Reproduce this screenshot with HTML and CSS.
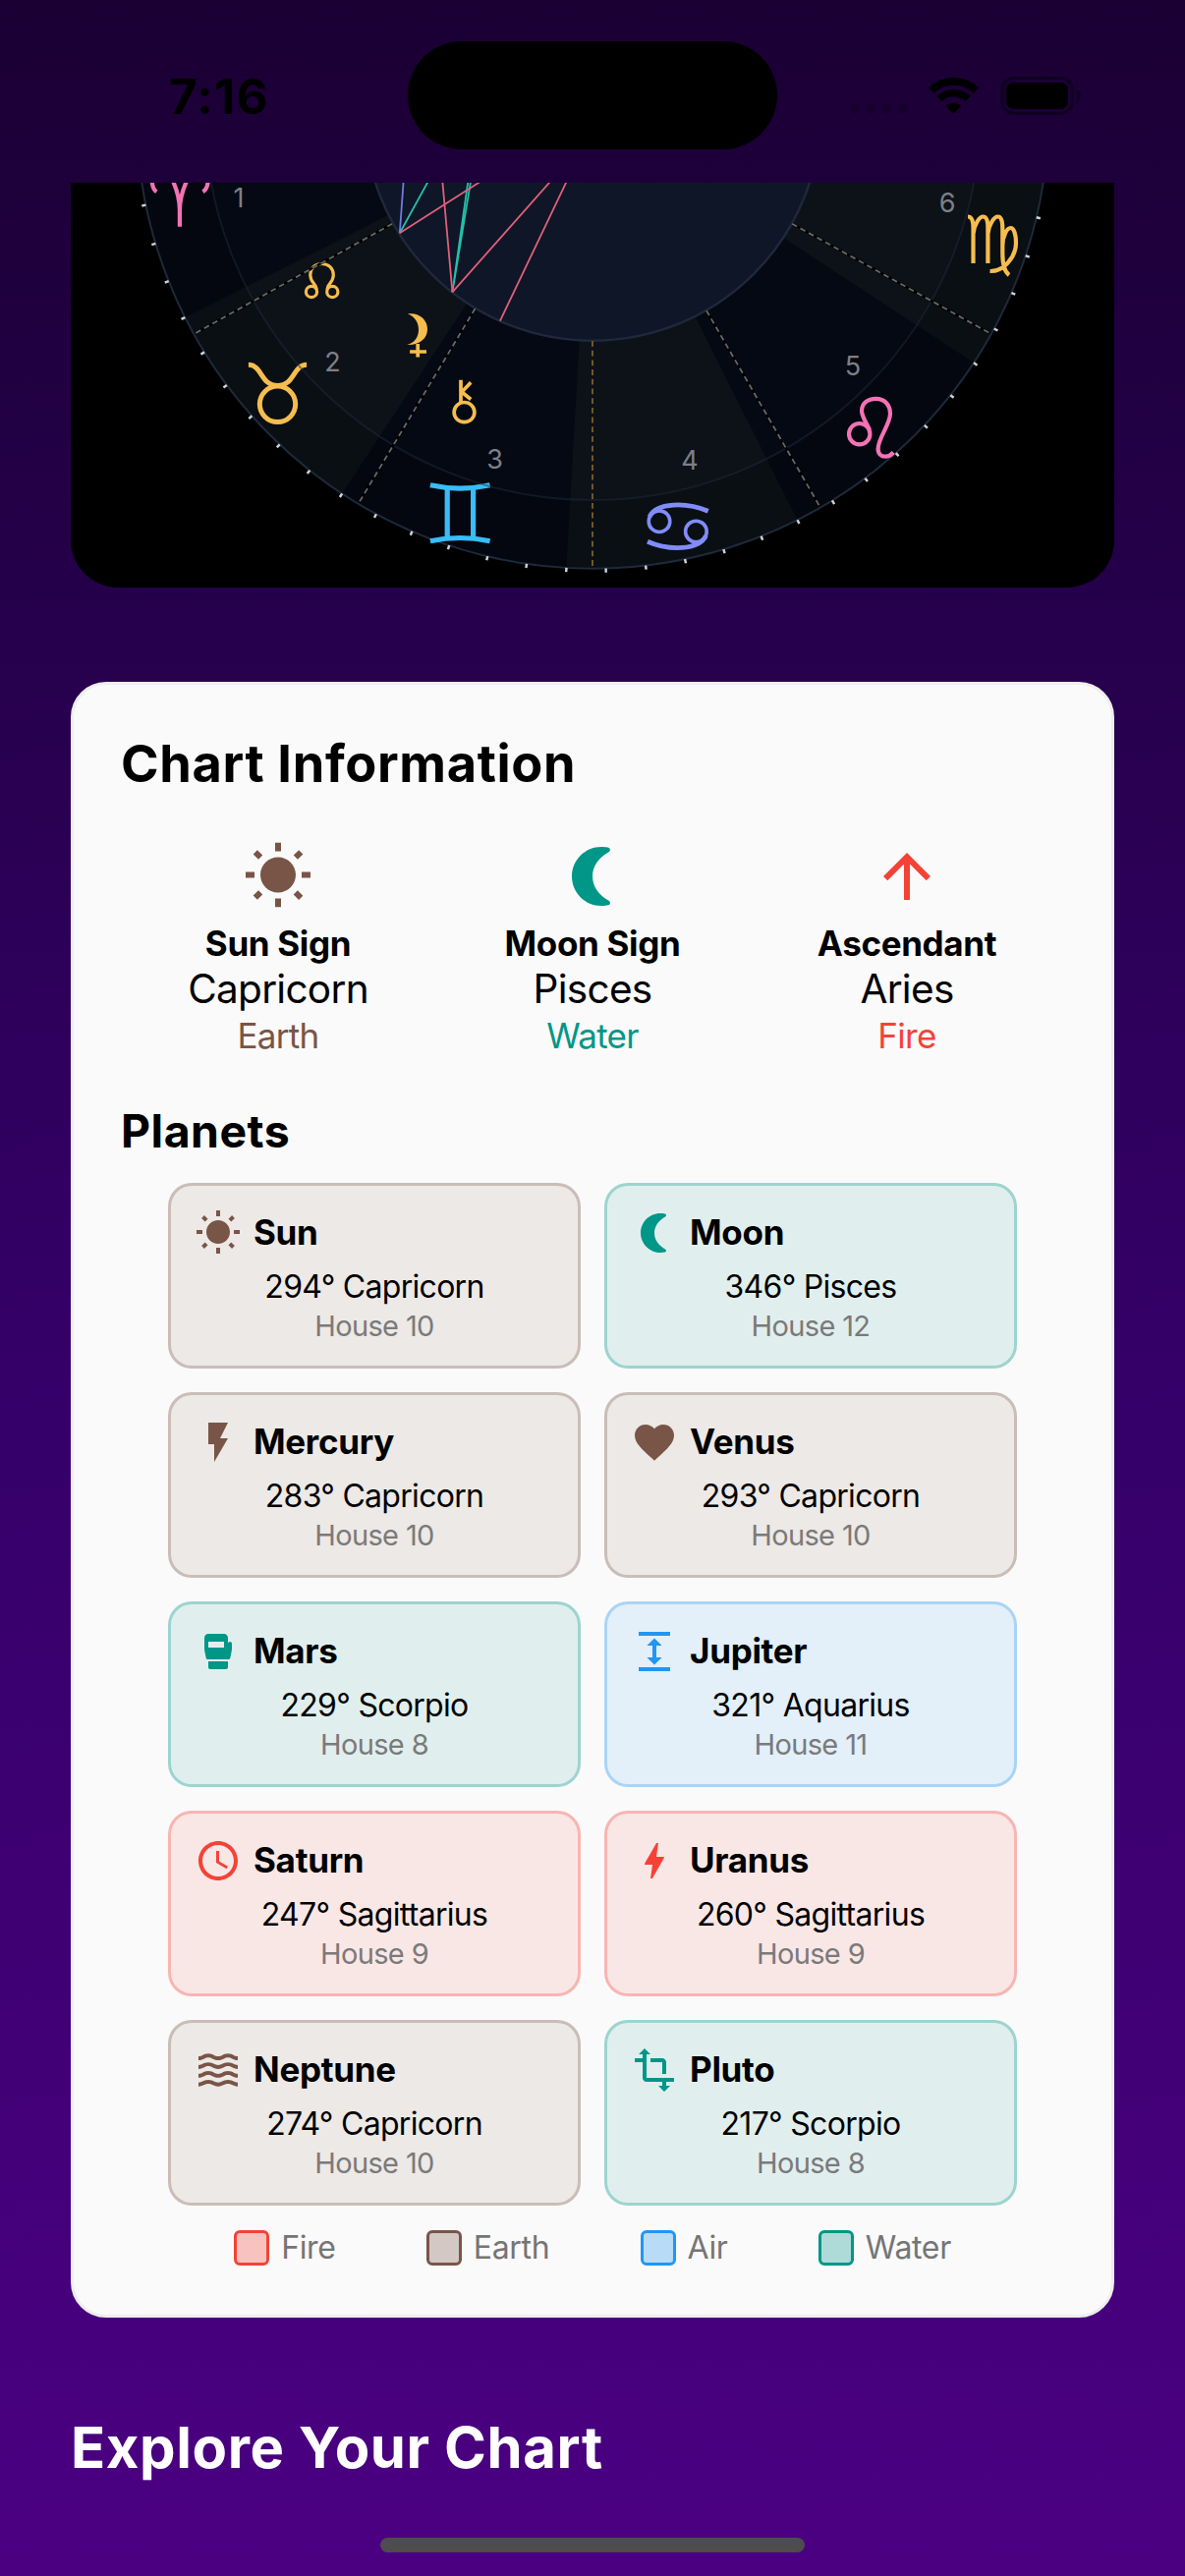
FILE: index.html
```html
<!DOCTYPE html>
<html lang="en">
<head>
<meta charset="utf-8">
<title>Birth Chart</title>
<link rel="stylesheet" href="styles.css">
</head>
<body>
<svg class="defs" width="0" height="0" aria-hidden="true">
  <symbol id="i-sun" viewBox="0 0 24 24"><path d="M6.76 4.84l-1.8-1.79-1.41 1.41 1.79 1.79 1.42-1.41zM4 10.5H1v2h3v-2zm9-9.95h-2V3.5h2V.55zm7.45 3.91l-1.41-1.41-1.79 1.79 1.41 1.41 1.79-1.79zm-3.21 13.7l1.79 1.8 1.41-1.41-1.8-1.79-1.4 1.4zM20 10.5v2h3v-2h-3zm-8-5c-3.31 0-6 2.69-6 6s2.69 6 6 6 6-2.69 6-6-2.69-6-6-6zm-1 16.95h2V19.5h-2v2.95zm-7.45-3.91l1.41 1.41 1.79-1.8-1.41-1.41-1.79 1.8z"/></symbol>
  <symbol id="i-moon" viewBox="0 0 24 24"><path d="M15 2C9.48 2 5 6.48 5 12s4.48 10 10 10c.9 0 1.7-.05 2.35-.22.78-.22.85-1.12.15-1.53C14.2 18.4 12 15.5 12 12s2.2-6.4 5.5-8.25c.7-.41.63-1.31-.15-1.53C16.7 2.05 15.9 2 15 2z"/></symbol>
  <symbol id="i-up" viewBox="0 0 24 24"><path d="M4 12l1.41 1.41L11 7.83V20h2V7.83l5.58 5.59L20 12l-8-8-8 8z"/></symbol>
  <symbol id="i-flash" viewBox="0 0 24 24"><path d="M7 2v11h3v9l7-12h-4l4-8z"/></symbol>
  <symbol id="i-heart" viewBox="0 0 24 24"><path d="M12 21.35l-1.45-1.32C5.4 15.36 2 12.28 2 8.5 2 5.42 4.42 3 7.5 3c1.74 0 3.41.81 4.5 2.09C13.09 3.81 14.76 3 16.5 3 19.58 3 22 5.42 22 8.5c0 3.78-3.4 6.86-8.55 11.54L12 21.35z"/></symbol>
  <symbol id="i-glove" viewBox="0 0 24 24"><path d="M7 20c0 .55.45 1 1 1h8c.55 0 1-.45 1-1v-3H7v3zM18 7c-.55 0-1 .45-1 1V5c0-1.1-.9-2-2-2H7c-1.1 0-2 .9-2 2v5.8c0 .13.01.26.04.39l.8 4c.09.47.5.8.98.8h10.36c.45 0 .89-.36.98-.8l.8-4c.03-.13.04-.26.04-.39V8c0-.55-.45-1-1-1zm-3 3H7V7h8v3z"/></symbol>
  <symbol id="i-expand" viewBox="0 0 24 24"><path d="M4 20h16v2H4zM4 2h16v2H4zm9 7h2.8L12 5.2 8.2 9H11v6H8.200l3.8 3.800L15.800 15H13z"/></symbol>
  <symbol id="i-clock" viewBox="0 0 24 24"><path d="M11.99 2C6.47 2 2 6.48 2 12s4.47 10 9.99 10C17.52 22 22 17.52 22 12S17.52 2 11.99 2zM12 20c-4.42 0-8-3.58-8-8s3.58-8 8-8 8 3.58 8 8-3.58 8-8 8zm.5-13H11v6l5.25 3.15.75-1.23-4.5-2.67z"/></symbol>
  <symbol id="i-bolt" viewBox="0 0 24 24"><path d="M11 21h-1l1-7H7.5c-.58 0-.57-.32-.38-.66.19-.34.05-.08.07-.12C8.48 10.94 10.42 7.54 13 3h1l-1 7h3.5c.49 0 .56.33.47.51l-.07.15C12.96 17.55 11 21 11 21z"/></symbol>
  <symbol id="i-waves" viewBox="0 0 24 24">
    <path id="wave" d="M17 16.99c-1.35 0-2.2.42-2.95.8-.65.33-1.18.6-2.05.6-.9 0-1.4-.25-2.05-.6-.75-.38-1.57-.8-2.95-.8s-2.2.42-2.95.8c-.65.33-1.17.6-2.05.6v1.95c1.35 0 2.2-.42 2.95-.8.65-.33 1.17-.6 2.05-.6s1.4.25 2.05.6c.75.38 1.57.8 2.95.8s2.2-.42 2.95-.8c.65-.33 1.18-.6 2.05-.6.9 0 1.4.25 2.05.6.75.38 1.58.8 2.95.8v-1.95c-.9 0-1.4-.25-2.05-.6-.75-.38-1.6-.8-2.95-.8z"/>
    <use href="#wave" y="-4.45"/><use href="#wave" y="-8.9"/><use href="#wave" y="-13.35"/>
  </symbol>
  <symbol id="i-transform" viewBox="0 0 24 24"><path d="M22 18v-2H8V4h2L7 1 4 4h2v2H2v2h4v8c0 1.1.9 2 2 2h8v2h-2l3 3 3-3h-2v-2h4zM10 8h6v6h2V8c0-1.1-.9-2-2-2h-6v2z"/></symbol>
</svg>

<header class="status">
  <div class="time">7:16</div>
  <div class="island"></div>
  <svg class="indicators" viewBox="860 72 244 50" width="244" height="50">
    <g class="cell"><circle cx="870" cy="110.7" r="5"/><circle cx="886" cy="110.7" r="5"/><circle cx="902" cy="110.7" r="5"/><circle cx="918" cy="110.7" r="5"/></g>
    <g class="wifi">
      <path d="M947.7 91.9A33.2 33.2 0 0 1 993.3 91.9"/>
      <path d="M955.9 100.6A21 21 0 0 1 985.1 100.6"/>
      <path class="wifi-dot" d="M970.5 116L962.7 107.8A11.3 11.3 0 0 1 978.3 107.8Z"/>
    </g>
    <rect class="battery-shell" x="1020" y="79.5" width="71.3" height="35.8" rx="11.5"/>
    <rect x="1024" y="84" width="63" height="27" rx="7.5"/>
    <path class="battery-cap" d="M1096 91.5c2.5 1 3.8 3.2 3.8 5.9s-1.3 4.9-3.8 5.900z"/>
  </svg>
</header>

<main class="content">
  <section class="wheel-card">
    <svg class="wheel" viewBox="72 186 1062 412" width="1062" height="412">
      <clipPath id="viewport"><rect x="72" y="186" width="1062" height="412"/></clipPath>
      <g clip-path="url(#viewport)">
        <circle class="wheel-base" cx="603" cy="114.5" r="464.2"/>
        <g class="sector">
          <path d="M603 114.5L188.3 323.1A464.2 464.2 0 0 0 348.2 502.5Z"/>
          <path d="M603 114.5L576.3 577.9A464.2 464.2 0 0 0 811.6 529.2Z"/>
          <path d="M603 114.5L991 369.3A464.2 464.2 0 0 0 1066.4 87.8Z"/>
        </g>
        <circle class="zodiac-shade" cx="603" cy="114.5" r="429.4"/>
        <circle class="ring-outer" cx="603" cy="114.5" r="464.2"/>
        <circle class="ticks" cx="603" cy="114.5" r="466.3" pathLength="72"/>

        <g class="glyph fire">
          <path d="M154.6 184C155 189 156 193 159.3 195.3M174 180C179 190 182.9 201 182.9 214V230.7M192 180C187 190 182.9 201 182.9 214M211.8 184C211.4 189 210 193 206.5 195.3"/>
          <path d="M885 437.5C882 431 877 424 877 418.3C877 410.5 883 405.8 891.4 405.8C900.5 405.8 906 412.5 906 421C906 432 893.6 446 893.6 456.7C893.6 462 897 464.7 901 464.7C905 464.7 907.5 462.5 909.3 460.5"/>
          <circle cx="874.7" cy="441.7" r="10.7"/>
        </g>
        <g class="glyph earth heavy">
          <circle cx="282.5" cy="411.3" r="18.2"/>
          <path d="M252.9 371.3C267 371.3 265 392.5 282.5 392.5C300 392.5 298 371.3 312.1 371.3"/>
        </g>
        <g class="glyph earth">
          <path d="M985 220.5C989 220.5 990.5 226 990.5 232V268M990.5 238C991.5 228 997 220.5 1000.5 220.5C1004 220.5 1005.4 226 1005.4 232V268M1005.4 238C1006.4 228 1012 220.5 1015.5 220.5C1019 220.5 1020.3 226 1020.3 232V258C1020.3 268 1021.5 276 1027 280M1020.3 250C1020.3 240 1025 232 1028.5 232C1032 232 1034 239 1034 247C1034 262 1021 276.5 1007.5 276"/>
        </g>
        <g class="glyph air">
          <path d="M437.9 493.8Q468.2 500.4 498.6 493.8M437.9 550.8Q468.2 544.2 498.6 550.8M455.2 497V547.5M481.6 497V547.5"/>
        </g>
        <g class="glyph water">
          <circle cx="671" cy="530.7" r="10.8"/><circle cx="708.4" cy="541" r="10.8"/>
        </g>
        <g class="glyph water arcs">
          <path d="M661 526C668 511 699 511 720.7 520.3M718.4 545.5C711 560.5 680.5 560.5 659 551.2"/>
        </g>
        <g class="glyph node">
          <circle cx="317" cy="297" r="5.6"/><circle cx="338.3" cy="297" r="5.6"/>
          <path d="M322 295C322.5 289 315.8 288 315.8 280C315.8 273 320.5 268.5 327.500 268.5C334.5 268.5 339.3 273 339.3 280C339.3 288 332.5 289 333.2 295"/>
        </g>
        <g class="glyph point">
          <path d="M469 386.7V411M479.2 389.3L470 399L479.2 406.5"/>
          <ellipse cx="472.5" cy="419.6" rx="10.4" ry="10.1"/>
          <path d="M425.2 350V363.5M417.1 358H434"/>
        </g>
        <path class="lilith" d="M414.8 319.5C426 317.5 435 325 435 335C435 344 427.5 351.5 414.3 351C422 349 426 343 426 335.5C426 328 422 322 414.8 319.5Z"/>

        <circle class="ring-mid" cx="603" cy="114.5" r="394.6"/>
        <circle class="disc" cx="603" cy="114.5" r="232.2"/>
        <path class="cusp-base" d="M399.3 227.7L198.6 339.3M483.6 314L365.7 511M718.9 316L833.6 514.3M806 227.7L1007.1 339"/>
        <path class="cusp" d="M399.3 227.7L198.6 339.3M483.6 314L365.7 511M718.9 316L833.6 514.3M806 227.7L1007.1 339"/>
        <path class="cusp-ic" d="M603 347V578"/>

        <g class="aspect sextile"><path d="M406.8 237.3L411 180"/></g>
        <g class="aspect trine"><path d="M406.8 237.3L438.3 180M460.4 297.3L477 180M460.4 297.3L479.8 180"/></g>
        <g class="aspect square"><path d="M406.8 237.3L496.5 180M460.4 297.3L449.9 180M460.4 297.3L564.3 180M508.9 326.7L578.9 180"/></g>
      </g>

      <g class="house-no">
        <text x="243" y="210.5">1</text><text x="338.500" y="378.3">2</text><text x="503.7" y="476.7">3</text>
        <text x="702" y="478">4</text><text x="868" y="381.7">5</text><text x="964" y="215.9">6</text>
      </g>
    </svg>
  </section>

  <section class="info">
    <h2 class="info-title">Chart Information</h2>
    <div class="signs">
      <div class="sign">
        <svg class="icon-lg earth"><use href="#i-sun"/></svg>
        <div class="sign-label">Sun Sign</div><div class="sign-value">Capricorn</div><div class="sign-element earth">Earth</div>
      </div>
      <div class="sign">
        <svg class="icon-lg water"><use href="#i-moon"/></svg>
        <div class="sign-label">Moon Sign</div><div class="sign-value">Pisces</div><div class="sign-element water">Water</div>
      </div>
      <div class="sign">
        <svg class="icon-lg fire"><use href="#i-up"/></svg>
        <div class="sign-label">Ascendant</div><div class="sign-value">Aries</div><div class="sign-element fire">Fire</div>
      </div>
    </div>

    <h3 class="planets-title">Planets</h3>
    <div class="planets">
      <article class="planet earth"><div class="planet-head"><svg class="icon"><use href="#i-sun"/></svg><h4>Sun</h4></div><p class="position">294° Capricorn</p><p class="house">House 10</p></article>
      <article class="planet water"><div class="planet-head"><svg class="icon"><use href="#i-moon"/></svg><h4>Moon</h4></div><p class="position">346° Pisces</p><p class="house">House 12</p></article>
      <article class="planet earth"><div class="planet-head"><svg class="icon"><use href="#i-flash"/></svg><h4>Mercury</h4></div><p class="position">283° Capricorn</p><p class="house">House 10</p></article>
      <article class="planet earth"><div class="planet-head"><svg class="icon"><use href="#i-heart"/></svg><h4>Venus</h4></div><p class="position">293° Capricorn</p><p class="house">House 10</p></article>
      <article class="planet water"><div class="planet-head"><svg class="icon"><use href="#i-glove"/></svg><h4>Mars</h4></div><p class="position">229° Scorpio</p><p class="house">House 8</p></article>
      <article class="planet air"><div class="planet-head"><svg class="icon"><use href="#i-expand"/></svg><h4>Jupiter</h4></div><p class="position">321° Aquarius</p><p class="house">House 11</p></article>
      <article class="planet fire"><div class="planet-head"><svg class="icon"><use href="#i-clock"/></svg><h4>Saturn</h4></div><p class="position">247° Sagittarius</p><p class="house">House 9</p></article>
      <article class="planet fire"><div class="planet-head"><svg class="icon"><use href="#i-bolt"/></svg><h4>Uranus</h4></div><p class="position">260° Sagittarius</p><p class="house">House 9</p></article>
      <article class="planet earth"><div class="planet-head"><svg class="icon"><use href="#i-waves"/></svg><h4>Neptune</h4></div><p class="position">274° Capricorn</p><p class="house">House 10</p></article>
      <article class="planet water"><div class="planet-head"><svg class="icon"><use href="#i-transform"/></svg><h4>Pluto</h4></div><p class="position">217° Scorpio</p><p class="house">House 8</p></article>
    </div>

    <div class="legend">
      <div class="key fire"><span class="swatch"></span><span class="key-name">Fire</span></div>
      <div class="key earth"><span class="swatch"></span><span class="key-name">Earth</span></div>
      <div class="key air"><span class="swatch"></span><span class="key-name">Air</span></div>
      <div class="key water"><span class="swatch"></span><span class="key-name">Water</span></div>
    </div>
  </section>

  <h2 class="explore">Explore Your Chart</h2>
</main>
<div class="home-indicator"></div>
</body>
</html>
```
FILE: styles.css
```css
* { box-sizing: border-box; margin: 0; padding: 0; }

body {
  width: 1206px;
  height: 2622px;
  overflow: hidden;
  display: flex;
  flex-direction: column;
  background: linear-gradient(180deg, #1a0033 0%, #330066 50%, #4b0082 100%);
  font-family: Inter, "Liberation Sans", sans-serif;
  color: #000;
}

.defs { position: absolute; }

.fire { --tone: 244, 67, 54; }
.earth { --tone: 121, 85, 72; }
.air { --tone: 33, 150, 243; }
.water { --tone: 0, 150, 136; }

/* Status bar */
.status {
  height: 186px;
  flex: none;
  display: grid;
  grid-template-columns: 415px 376px 1fr;
  align-items: start;
}
.time {
  padding: 63px 0 0 172px;
  font-size: 49.5px;
  line-height: 70px;
  font-weight: 650;
  letter-spacing: 1.2px;
}
.island { height: 110px; margin-top: 42px; border-radius: 55px; background: #000; }
.indicators { margin: 72px 0 0 69px; display: block; }
.cell { fill: #000; fill-opacity: .2; }
.wifi { fill: none; stroke: #000; stroke-width: 7.6; }
.wifi-dot { fill: #000; stroke: none; }
.battery-shell { fill: none; stroke: #000; stroke-opacity: .4; stroke-width: 3; }
.battery-cap { fill: #000; fill-opacity: .45; }

.content { padding: 0 72px; flex: none; }

/* Chart wheel */
.wheel-card {
  height: 412px;
  border-radius: 0 0 48px 48px;
  background: #000;
}
.wheel { display: block; overflow: visible; }
.wheel-base { fill: #050913; }
.sector path { fill: #0d1218; }
.zodiac-shade { fill: none; stroke: #000; stroke-opacity: .16; stroke-width: 69.6; }
.ring-outer { fill: none; stroke: #1e293b; stroke-width: 2; }
.ring-mid { fill: none; stroke: #1e293b; stroke-opacity: .5; stroke-width: 2; }
.disc { fill: #0f1627; stroke: #1e293b; stroke-width: 2.4; }
.ticks { fill: none; stroke: #d0d3d8; stroke-width: 4.2; stroke-dasharray: .06 .94; stroke-dashoffset: -.63; }
.cusp-base { fill: none; stroke: #000; stroke-width: 2.6; }
.cusp { fill: none; stroke: #686868; stroke-width: 1.8; stroke-dasharray: 5.8 3.9; }
.cusp-ic { fill: none; stroke: #7a602a; stroke-width: 1.8; stroke-dasharray: 5.8 3.9; }
.aspect { fill: none; stroke-width: 1.8; }
.sextile { stroke: #727be0; }
.trine { stroke: #25bfa8; }
.square { stroke: #e0607a; }
.glyph { fill: none; stroke-width: 4.2; }
.glyph.fire { stroke: #f472b6; }
.glyph.earth { stroke: #f6bd4e; }
.glyph.heavy { stroke-width: 5; }
.glyph.air { stroke: #38bdf8; stroke-width: 5.2; }
.glyph.water { stroke: #818cf8; stroke-width: 3.6; }
.glyph.arcs { stroke-width: 4.8; }
.glyph.node { stroke: #f6bd4e; stroke-width: 3.2; }
.glyph.point { stroke: #f6bd4e; stroke-width: 3.7; }
.lilith { fill: #f6bd4e; }
.house-no text { fill: #7d8087; font-size: 27px; text-anchor: middle; }

/* Information card */
.info {
  height: 1665px;
  margin-top: 96px;
  padding: 48px;
  border: 3px solid #eee;
  border-radius: 36px;
  background: #fafafa;
}
.info-title { font-size: 52.3px; line-height: 64px; font-weight: 700; letter-spacing: .65px; }
.signs { display: grid; grid-template-columns: repeat(3, 1fr); margin-top: 47px; }
.sign { display: flex; flex-direction: column; align-items: center; }
.icon-lg { width: 72px; height: 72px; fill: rgb(var(--tone)); margin-bottom: 11px; }
.sign-label { font-size: 35px; line-height: 43px; font-weight: 700; letter-spacing: -.35px; }
.sign-value { font-size: 40.5px; line-height: 50px; letter-spacing: -.7px; }
.sign-element { font-size: 35px; line-height: 44px; letter-spacing: -.7px; color: rgb(var(--tone)); }
.planets-title { margin-top: 46px; font-size: 46.4px; line-height: 58px; font-weight: 700; letter-spacing: .5px; }

.planets {
  margin: 24px 48px 0;
  display: grid;
  grid-template-columns: repeat(2, 420px);
  gap: 24px;
}
.planet {
  height: 189px;
  padding: 24px;
  border: 3px solid rgba(var(--tone), .3);
  border-radius: 24px;
  background: rgba(var(--tone), .1);
  text-align: center;
}
.planet-head { display: flex; align-items: flex-start; gap: 12px; }
.icon { width: 48px; height: 48px; fill: rgb(var(--tone)); }
.planet h4 { font-size: 35px; line-height: 46px; font-weight: 700; letter-spacing: -.3px; }
.position { margin-top: 11px; font-size: 32px; line-height: 40px; letter-spacing: -.7px; }
.house { font-size: 29px; line-height: 39px; letter-spacing: -.64px; color: #7a7a7a; }

.legend { margin-top: 25px; display: flex; justify-content: center; gap: 92.3px; }
.key { display: flex; align-items: center; gap: 12px; }
.swatch { width: 36px; height: 36px; border: 3px solid rgb(var(--tone)); border-radius: 6px; background: rgba(var(--tone), .3); }
.key-name { font-size: 32px; line-height: 36px; letter-spacing: -.35px; color: #757575; }

.explore { margin-top: 96px; font-size: 58px; line-height: 72px; font-weight: 700; letter-spacing: .6px; color: #fff; }

.home-indicator { flex: none; width: 432px; height: 15px; margin: 56px auto 0; border-radius: 8px; background: #4d4d4d; }
```
